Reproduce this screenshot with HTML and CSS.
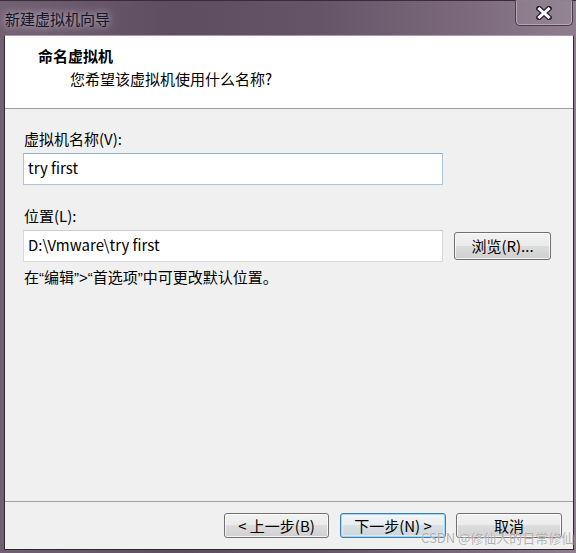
FILE: index.html
```html
<!DOCTYPE html>
<html lang="zh-CN">
<head>
<meta charset="utf-8">
<title>新建虚拟机向导</title>
<link rel="stylesheet" href="styles.css">
</head>
<body>
<div class="window">
  <div class="titlebar">
    <span class="title">新建虚拟机向导</span>
    <div class="close">
      <svg width="16" height="14" viewBox="0 0 16 14">
        <path d="M3 2.5 L13 11.5 M13 2.5 L3 11.5" stroke="#2e2433" stroke-width="5.4" stroke-linecap="square" fill="none"/>
        <path d="M3.5 3 L12.5 11 M12.5 3 L3.5 11" stroke="#ffffff" stroke-width="3" stroke-linecap="square" fill="none"/>
      </svg>
    </div>
  </div>
  <div class="client">
    <div class="header">
      <div class="h-title">命名虚拟机</div>
      <div class="h-sub">您希望该虚拟机使用什么名称?</div>
    </div>
    <div class="body">
      <div class="label">虚拟机名称(V):</div>
      <div class="input focus">try first</div>
      <div class="label second">位置(L):</div>
      <div class="row">
        <div class="input">D:\Vmware\try first</div>
        <div class="btn browse">浏览(R)...</div>
      </div>
      <div class="hint">在<span class="q">“</span>编辑<span class="q">”&gt;“</span>首选项<span class="q">”</span>中可更改默认位置。</div>
    </div>
    <div class="footer">
      <div class="btn prev">&lt;&nbsp;上一步(B)</div>
      <div class="btn next">下一步(N)&nbsp;&gt;</div>
      <div class="btn cancel">取消</div>
    </div>
  </div>
  <div class="watermark">CSDN @修仙人的日常修仙</div>
</div>
</body>
</html>
```

FILE: styles.css
```css
html, body {
  margin: 0;
  padding: 0;
}

.window {
  position: relative;
  width: 576px;
  height: 553px;
  display: flex;
  flex-direction: column;
  overflow: hidden;
  background: linear-gradient(90deg, #715f72 0%, #5e4c61 30%, #655368 55%, #7b697b 80%, #8e7e8e 100%);
  font-family: "Noto Sans CJK SC", sans-serif;
  font-size: 15px;
  color: #000;
}

.titlebar {
  height: 35px;
  flex: none;
  display: flex;
  align-items: flex-start;
  box-shadow: inset 0 1px 0 #3a2b3c;
}

.title {
  margin: 8px 0 0 5px;
  line-height: 22px;
  color: #14142a;
  text-shadow: 0 0 6px rgba(255, 255, 255, 0.55), 0 0 14px rgba(230, 215, 230, 0.6);
}

.close {
  margin-left: auto;
  margin-right: 3px;
  width: 58px;
  height: 26px;
  box-sizing: border-box;
  border: 1px solid #4a3a4c;
  border-top: none;
  border-radius: 0 0 5px 5px;
  box-shadow: inset 0 0 0 1px rgba(230, 220, 230, 0.45);
  background: rgba(255, 255, 255, 0.06);
  display: flex;
  align-items: center;
  justify-content: center;
}

.client {
  flex: 1;
  min-height: 0;
  margin: 0 2px 3px 4px;
  border: 1px solid #2b2b2b;
  border-top-color: #a99da9;
  display: flex;
  flex-direction: column;
  background: #f0f0f0;
}

.header {
  height: 73px;
  flex: none;
  box-sizing: border-box;
  background: #ffffff;
  border-bottom: 1px solid #a0a0a0;
  padding: 10px 0 0 33px;
}

.h-title {
  font-weight: bold;
  line-height: 20px;
}

.h-sub {
  margin: 3px 0 0 32px;
  line-height: 20px;
}

.body {
  flex: 1;
  padding: 20px 0 0 18px;
}

.label {
  line-height: 20px;
  height: 20px;
  padding-left: 1px;
}

.label.second {
  margin-top: 21px;
}

.input {
  box-sizing: border-box;
  width: 420px;
  height: 32px;
  margin-top: 4px;
  padding: 0 4px;
  border: 1px solid #d6d9de;
  border-top-color: #c9ccd1;
  background: #ffffff;
  line-height: 28px;
}

.input.focus {
  border-color: #a9c3da;
  border-top-color: #8fb0cc;
}

.row {
  display: flex;
  align-items: flex-start;
}

.btn {
  box-sizing: border-box;
  border: 1px solid #707070;
  border-radius: 3px;
  background: linear-gradient(#f2f2f2 0%, #ebebeb 50%, #dddddd 50%, #cfcfcf 100%);
  box-shadow: inset 0 0 0 1px rgba(255, 255, 255, 0.75);
  text-align: center;
  white-space: nowrap;
}

.browse {
  width: 97px;
  height: 28px;
  margin: 6px 0 0 11px;
  line-height: 26px;
}

.hint {
  margin-top: 5px;
  line-height: 20px;
  padding-left: 1px;
}

.q {
  font-family: "Liberation Sans", sans-serif;
}

.footer {
  height: 48px;
  flex: none;
  box-sizing: border-box;
  border-top: 1px solid #a0a0a0;
  display: flex;
  justify-content: flex-end;
  align-items: flex-start;
  padding: 11px 11px 0 0;
}

.footer .btn {
  width: 106px;
  height: 25px;
  line-height: 23px;
}

.footer .prev {
  width: 105px;
}

.footer .next {
  margin-left: 11px;
  border-color: #3c7fb1;
  box-shadow: inset 0 0 0 1px #9fd6f5, inset 0 0 0 2px rgba(255, 255, 255, 0.4);
  background: linear-gradient(#f1f5f8 0%, #e8edf1 50%, #d9e1e6 50%, #cbd4da 100%);
}

.footer .cancel {
  margin-left: 10px;
}

.watermark {
  position: absolute;
  left: 421px;
  top: 529px;
  font-size: 13px;
  line-height: 18px;
  color: rgba(150, 150, 150, 0.75);
  text-shadow: 0 0 1px rgba(255, 255, 255, 0.8);
  white-space: nowrap;
}
```
